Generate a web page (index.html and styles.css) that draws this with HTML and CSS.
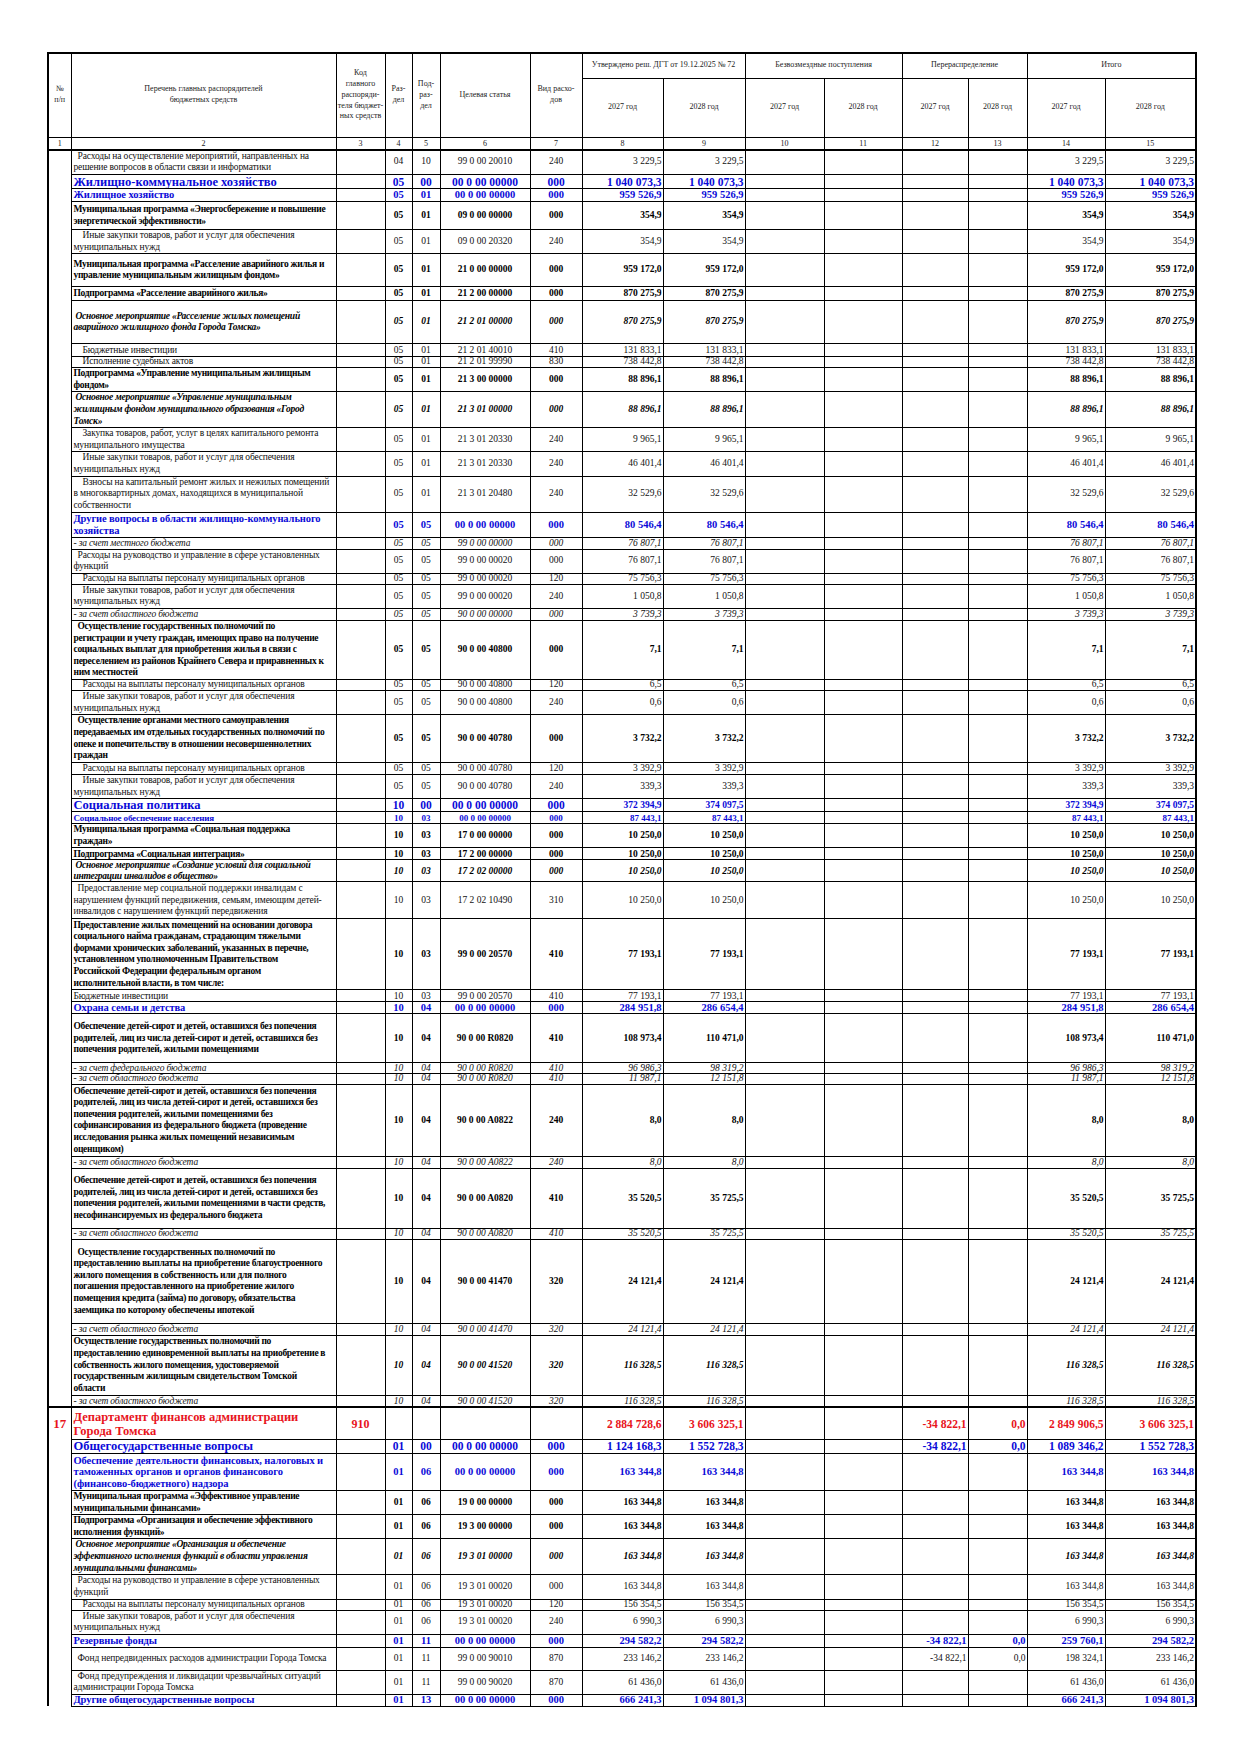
FILE: index.html
```html
<!DOCTYPE html>
<html lang="ru">
<head>
<meta charset="utf-8">
<title>Ведомственная структура расходов</title>
<link rel="stylesheet" href="styles.css">
</head>
<body>
<div class="sheet">
<table class="t">
<colgroup>
<col class="w1"><col class="w2"><col class="w3"><col class="w4"><col class="w5"><col class="w6"><col class="w7"><col class="w8"><col class="w9"><col class="w10"><col class="w11"><col class="w12"><col class="w13"><col class="w14"><col class="w15">
</colgroup>
<thead>
<tr class="h25">
<th rowspan="2" class="bl">№<br>п/п</th>
<th rowspan="2">Перечень главных распорядителей<br>бюджетных средств</th>
<th rowspan="2">Код<br>главного<br>распоряди-<br>теля бюджет-<br>ных средств</th>
<th rowspan="2">Раз-<br>дел</th>
<th rowspan="2">Под-<br>раз-<br>дел</th>
<th rowspan="2">Целевая статья</th>
<th rowspan="2">Вид расхо-<br>дов</th>
<th colspan="2">Утверждено реш. ДГТ от 19.12.2025 № 72</th>
<th colspan="2">Безвозмездные поступления</th>
<th colspan="2">Перераспределение</th>
<th colspan="2" class="br">Итого</th>
</tr>
<tr class="h59">
<th>2027 год</th><th>2028 год</th><th>2027 год</th><th>2028 год</th><th>2027 год</th><th>2028 год</th><th>2027 год</th><th class="br">2028 год</th>
</tr>
<tr class="num">
<th class="bl">1</th><th>2</th><th>3</th><th>4</th><th>5</th><th>6</th><th>7</th><th>8</th><th>9</th><th>10</th><th>11</th><th>12</th><th>13</th><th>14</th><th class="br">15</th>
</tr>
</thead>
<tbody>
<tr class="h25"><td></td><td class="i1">Расходы на осуществление мероприятий, направленных на<br>решение вопросов в области связи и информатики</td><td></td><td>04</td><td>10</td><td>99 0 00 20010</td><td>240</td><td>3 229,5</td><td>3 229,5</td><td></td><td></td><td></td><td></td><td>3 229,5</td><td>3 229,5</td></tr>
<tr class="g1 h14"><td></td><td>Жилищно-коммунальное хозяйство</td><td></td><td>05</td><td>00</td><td>00 0 00 00000</td><td>000</td><td>1 040 073,3</td><td>1 040 073,3</td><td></td><td></td><td></td><td></td><td>1 040 073,3</td><td>1 040 073,3</td></tr>
<tr class="g2 h13"><td></td><td>Жилищное хозяйство</td><td></td><td>05</td><td>01</td><td>00 0 00 00000</td><td>000</td><td>959 526,9</td><td>959 526,9</td><td></td><td></td><td></td><td></td><td>959 526,9</td><td>959 526,9</td></tr>
<tr class="b h28"><td></td><td>Муниципальная программа «Энергосбережение и повышение<br>энергетической эффективности»</td><td></td><td>05</td><td>01</td><td>09 0 00 00000</td><td>000</td><td>354,9</td><td>354,9</td><td></td><td></td><td></td><td></td><td>354,9</td><td>354,9</td></tr>
<tr class="h24"><td></td><td class="i2">Иные закупки товаров, работ и услуг для обеспечения<br>муниципальных нужд</td><td></td><td>05</td><td>01</td><td>09 0 00 20320</td><td>240</td><td>354,9</td><td>354,9</td><td></td><td></td><td></td><td></td><td>354,9</td><td>354,9</td></tr>
<tr class="b h33"><td></td><td>Муниципальная программа «Расселение аварийного жилья и<br>управление муниципальным жилищным фондом»</td><td></td><td>05</td><td>01</td><td>21 0 00 00000</td><td>000</td><td>959 172,0</td><td>959 172,0</td><td></td><td></td><td></td><td></td><td>959 172,0</td><td>959 172,0</td></tr>
<tr class="b h14"><td></td><td>Подпрограмма «Расселение аварийного жилья»</td><td></td><td>05</td><td>01</td><td>21 2 00 00000</td><td>000</td><td>870 275,9</td><td>870 275,9</td><td></td><td></td><td></td><td></td><td>870 275,9</td><td>870 275,9</td></tr>
<tr class="bi h43"><td></td><td class="i0">Основное мероприятие «Расселение жилых помещений<br>аварийного жилищного фонда Города Томска»</td><td></td><td>05</td><td>01</td><td>21 2 01 00000</td><td>000</td><td>870 275,9</td><td>870 275,9</td><td></td><td></td><td></td><td></td><td>870 275,9</td><td>870 275,9</td></tr>
<tr class="h13"><td></td><td class="i2">Бюджетные инвестиции</td><td></td><td>05</td><td>01</td><td>21 2 01 40010</td><td>410</td><td>131 833,1</td><td>131 833,1</td><td></td><td></td><td></td><td></td><td>131 833,1</td><td>131 833,1</td></tr>
<tr class="s h11"><td></td><td class="i2">Исполнение судебных актов</td><td></td><td>05</td><td>01</td><td>21 2 01 99990</td><td>830</td><td>738 442,8</td><td>738 442,8</td><td></td><td></td><td></td><td></td><td>738 442,8</td><td>738 442,8</td></tr>
<tr class="b h24"><td></td><td>Подпрограмма «Управление муниципальным жилищным<br>фондом»</td><td></td><td>05</td><td>01</td><td>21 3 00 00000</td><td>000</td><td>88 896,1</td><td>88 896,1</td><td></td><td></td><td></td><td></td><td>88 896,1</td><td>88 896,1</td></tr>
<tr class="bi h35"><td></td><td class="i0">Основное мероприятие «Управление муниципальным<br>жилищным фондом муниципального образования «Город<br>Томск»</td><td></td><td>05</td><td>01</td><td>21 3 01 00000</td><td>000</td><td>88 896,1</td><td>88 896,1</td><td></td><td></td><td></td><td></td><td>88 896,1</td><td>88 896,1</td></tr>
<tr class="h24"><td></td><td class="i2">Закупка товаров, работ, услуг в целях капитального ремонта<br>муниципального имущества</td><td></td><td>05</td><td>01</td><td>21 3 01 20330</td><td>240</td><td>9 965,1</td><td>9 965,1</td><td></td><td></td><td></td><td></td><td>9 965,1</td><td>9 965,1</td></tr>
<tr class="h24"><td></td><td class="i2">Иные закупки товаров, работ и услуг для обеспечения<br>муниципальных нужд</td><td></td><td>05</td><td>01</td><td>21 3 01 20330</td><td>240</td><td>46 401,4</td><td>46 401,4</td><td></td><td></td><td></td><td></td><td>46 401,4</td><td>46 401,4</td></tr>
<tr class="h36"><td></td><td class="i2">Взносы на капитальный ремонт жилых и нежилых помещений<br>в многоквартирных домах, находящихся в муниципальной<br>собственности</td><td></td><td>05</td><td>01</td><td>21 3 01 20480</td><td>240</td><td>32 529,6</td><td>32 529,6</td><td></td><td></td><td></td><td></td><td>32 529,6</td><td>32 529,6</td></tr>
<tr class="g2 h25"><td></td><td>Другие вопросы в области жилищно-коммунального<br>хозяйства</td><td></td><td>05</td><td>05</td><td>00 0 00 00000</td><td>000</td><td>80 546,4</td><td>80 546,4</td><td></td><td></td><td></td><td></td><td>80 546,4</td><td>80 546,4</td></tr>
<tr class="it h12"><td></td><td>- за счет местного бюджета</td><td></td><td>05</td><td>05</td><td>99 0 00 00000</td><td>000</td><td>76 807,1</td><td>76 807,1</td><td></td><td></td><td></td><td></td><td>76 807,1</td><td>76 807,1</td></tr>
<tr class="h24"><td></td><td class="i1">Расходы на руководство и управление в сфере установленных<br>функций</td><td></td><td>05</td><td>05</td><td>99 0 00 00020</td><td>000</td><td>76 807,1</td><td>76 807,1</td><td></td><td></td><td></td><td></td><td>76 807,1</td><td>76 807,1</td></tr>
<tr class="s h11"><td></td><td class="i2">Расходы на выплаты персоналу муниципальных органов</td><td></td><td>05</td><td>05</td><td>99 0 00 00020</td><td>120</td><td>75 756,3</td><td>75 756,3</td><td></td><td></td><td></td><td></td><td>75 756,3</td><td>75 756,3</td></tr>
<tr class="h24"><td></td><td class="i2">Иные закупки товаров, работ и услуг для обеспечения<br>муниципальных нужд</td><td></td><td>05</td><td>05</td><td>99 0 00 00020</td><td>240</td><td>1 050,8</td><td>1 050,8</td><td></td><td></td><td></td><td></td><td>1 050,8</td><td>1 050,8</td></tr>
<tr class="it h12"><td></td><td>- за счет областного бюджета</td><td></td><td>05</td><td>05</td><td>90 0 00 00000</td><td>000</td><td>3 739,3</td><td>3 739,3</td><td></td><td></td><td></td><td></td><td>3 739,3</td><td>3 739,3</td></tr>
<tr class="b h59"><td></td><td class="i1">Осуществление государственных полномочий по<br>регистрации и учету граждан, имеющих право на получение<br>социальных выплат для приобретения жилья в связи с<br>переселением из районов Крайнего Севера и приравненных к<br>ним местностей</td><td></td><td>05</td><td>05</td><td>90 0 00 40800</td><td>000</td><td>7,1</td><td>7,1</td><td></td><td></td><td></td><td></td><td>7,1</td><td>7,1</td></tr>
<tr class="s h11"><td></td><td class="i2">Расходы на выплаты персоналу муниципальных органов</td><td></td><td>05</td><td>05</td><td>90 0 00 40800</td><td>120</td><td>6,5</td><td>6,5</td><td></td><td></td><td></td><td></td><td>6,5</td><td>6,5</td></tr>
<tr class="h24"><td></td><td class="i2">Иные закупки товаров, работ и услуг для обеспечения<br>муниципальных нужд</td><td></td><td>05</td><td>05</td><td>90 0 00 40800</td><td>240</td><td>0,6</td><td>0,6</td><td></td><td></td><td></td><td></td><td>0,6</td><td>0,6</td></tr>
<tr class="b h48"><td></td><td class="i1">Осуществление органами местного самоуправления<br>передаваемых им отдельных государственных полномочий по<br>опеке и попечительству в отношении несовершеннолетних<br>граждан</td><td></td><td>05</td><td>05</td><td>90 0 00 40780</td><td>000</td><td>3 732,2</td><td>3 732,2</td><td></td><td></td><td></td><td></td><td>3 732,2</td><td>3 732,2</td></tr>
<tr class="h12"><td></td><td class="i2">Расходы на выплаты персоналу муниципальных органов</td><td></td><td>05</td><td>05</td><td>90 0 00 40780</td><td>120</td><td>3 392,9</td><td>3 392,9</td><td></td><td></td><td></td><td></td><td>3 392,9</td><td>3 392,9</td></tr>
<tr class="h24"><td></td><td class="i2">Иные закупки товаров, работ и услуг для обеспечения<br>муниципальных нужд</td><td></td><td>05</td><td>05</td><td>90 0 00 40780</td><td>240</td><td>339,3</td><td>339,3</td><td></td><td></td><td></td><td></td><td>339,3</td><td>339,3</td></tr>
<tr class="gp h13"><td></td><td>Социальная политика</td><td></td><td>10</td><td>00</td><td>00 0 00 00000</td><td>000</td><td>372 394,9</td><td>374 097,5</td><td></td><td></td><td></td><td></td><td>372 394,9</td><td>374 097,5</td></tr>
<tr class="g3 h12"><td></td><td>Социальное обеспечение населения</td><td></td><td>10</td><td>03</td><td>00 0 00 00000</td><td>000</td><td>87 443,1</td><td>87 443,1</td><td></td><td></td><td></td><td></td><td>87 443,1</td><td>87 443,1</td></tr>
<tr class="b h24"><td></td><td>Муниципальная программа «Социальная поддержка<br>граждан»</td><td></td><td>10</td><td>03</td><td>17 0 00 00000</td><td>000</td><td>10 250,0</td><td>10 250,0</td><td></td><td></td><td></td><td></td><td>10 250,0</td><td>10 250,0</td></tr>
<tr class="b h12"><td></td><td>Подпрограмма «Социальная интеграция»</td><td></td><td>10</td><td>03</td><td>17 2 00 00000</td><td>000</td><td>10 250,0</td><td>10 250,0</td><td></td><td></td><td></td><td></td><td>10 250,0</td><td>10 250,0</td></tr>
<tr class="bi tight h22"><td></td><td class="i0">Основное мероприятие «Создание условий для социальной<br>интеграции инвалидов в общество»</td><td></td><td>10</td><td>03</td><td>17 2 02 00000</td><td>000</td><td>10 250,0</td><td>10 250,0</td><td></td><td></td><td></td><td></td><td>10 250,0</td><td>10 250,0</td></tr>
<tr class="h37"><td></td><td class="i1">Предоставление мер социальной поддержки инвалидам с<br>нарушением функций передвижения, семьям, имеющим детей-<br>инвалидов с нарушением функций передвижения</td><td></td><td>10</td><td>03</td><td>17 2 02 10490</td><td>310</td><td>10 250,0</td><td>10 250,0</td><td></td><td></td><td></td><td></td><td>10 250,0</td><td>10 250,0</td></tr>
<tr class="b h71"><td></td><td>Предоставление жилых помещений на основании договора<br>социального найма гражданам, страдающим тяжелыми<br>формами хронических заболеваний, указанных в перечне,<br>установленном уполномоченным Правительством<br>Российской Федерации федеральным органом<br>исполнительной власти, в том числе:</td><td></td><td>10</td><td>03</td><td>99 0 00 20570</td><td>410</td><td>77 193,1</td><td>77 193,1</td><td></td><td></td><td></td><td></td><td>77 193,1</td><td>77 193,1</td></tr>
<tr class="h12"><td></td><td>Бюджетные инвестиции</td><td></td><td>10</td><td>03</td><td>99 0 00 20570</td><td>410</td><td>77 193,1</td><td>77 193,1</td><td></td><td></td><td></td><td></td><td>77 193,1</td><td>77 193,1</td></tr>
<tr class="g2 h12"><td></td><td>Охрана семьи и детства</td><td></td><td>10</td><td>04</td><td>00 0 00 00000</td><td>000</td><td>284 951,8</td><td>286 654,4</td><td></td><td></td><td></td><td></td><td>284 951,8</td><td>286 654,4</td></tr>
<tr class="b h49"><td></td><td>Обеспечение детей-сирот и детей, оставшихся без попечения<br>родителей, лиц из числа детей-сирот и детей, оставшихся без<br>попечения родителей, жилыми помещениями</td><td></td><td>10</td><td>04</td><td>90 0 00 R0820</td><td>410</td><td>108 973,4</td><td>110 471,0</td><td></td><td></td><td></td><td></td><td>108 973,4</td><td>110 471,0</td></tr>
<tr class="it s h11"><td></td><td>- за счет федерального бюджета</td><td></td><td>10</td><td>04</td><td>90 0 00 R0820</td><td>410</td><td>96 986,3</td><td>98 319,2</td><td></td><td></td><td></td><td></td><td>96 986,3</td><td>98 319,2</td></tr>
<tr class="it s h10"><td></td><td>- за счет областного бюджета</td><td></td><td>10</td><td>04</td><td>90 0 00 R0820</td><td>410</td><td>11 987,1</td><td>12 151,8</td><td></td><td></td><td></td><td></td><td>11 987,1</td><td>12 151,8</td></tr>
<tr class="b h72"><td></td><td>Обеспечение детей-сирот и детей, оставшихся без попечения<br>родителей, лиц из числа детей-сирот и детей, оставшихся без<br>попечения родителей, жилыми помещениями без<br>софинансирования из федерального бюджета (проведение<br>исследования рынка жилых помещений независимым<br>оценщиком)</td><td></td><td>10</td><td>04</td><td>90 0 00 A0822</td><td>240</td><td>8,0</td><td>8,0</td><td></td><td></td><td></td><td></td><td>8,0</td><td>8,0</td></tr>
<tr class="it h12"><td></td><td>- за счет областного бюджета</td><td></td><td>10</td><td>04</td><td>90 0 00 A0822</td><td>240</td><td>8,0</td><td>8,0</td><td></td><td></td><td></td><td></td><td>8,0</td><td>8,0</td></tr>
<tr class="b h60"><td></td><td>Обеспечение детей-сирот и детей, оставшихся без попечения<br>родителей, лиц из числа детей-сирот и детей, оставшихся без<br>попечения родителей, жилыми помещениями в части средств,<br>несофинансируемых из федерального бюджета</td><td></td><td>10</td><td>04</td><td>90 0 00 A0820</td><td>410</td><td>35 520,5</td><td>35 725,5</td><td></td><td></td><td></td><td></td><td>35 520,5</td><td>35 725,5</td></tr>
<tr class="it s h11"><td></td><td>- за счет областного бюджета</td><td></td><td>10</td><td>04</td><td>90 0 00 A0820</td><td>410</td><td>35 520,5</td><td>35 725,5</td><td></td><td></td><td></td><td></td><td>35 520,5</td><td>35 725,5</td></tr>
<tr class="b h84"><td></td><td class="i1">Осуществление государственных полномочий по<br>предоставлению выплаты на приобретение благоустроенного<br>жилого помещения в собственность или для полного<br>погашения предоставленного на приобретение жилого<br>помещения кредита (займа) по договору, обязательства<br>заемщика по которому обеспечены ипотекой</td><td></td><td>10</td><td>04</td><td>90 0 00 41470</td><td>320</td><td>24 121,4</td><td>24 121,4</td><td></td><td></td><td></td><td></td><td>24 121,4</td><td>24 121,4</td></tr>
<tr class="it h12"><td></td><td>- за счет областного бюджета</td><td></td><td>10</td><td>04</td><td>90 0 00 41470</td><td>320</td><td>24 121,4</td><td>24 121,4</td><td></td><td></td><td></td><td></td><td>24 121,4</td><td>24 121,4</td></tr>
<tr class="b bx h60"><td></td><td>Осуществление государственных полномочий по<br>предоставлению единовременной выплаты на приобретение в<br>собственность жилого помещения, удостоверяемой<br>государственным жилищным свидетельством Томской<br>области</td><td></td><td>10</td><td>04</td><td>90 0 00 41520</td><td>320</td><td>116 328,5</td><td>116 328,5</td><td></td><td></td><td></td><td></td><td>116 328,5</td><td>116 328,5</td></tr>
<tr class="it h12"><td></td><td>- за счет областного бюджета</td><td></td><td>10</td><td>04</td><td>90 0 00 41520</td><td>320</td><td>116 328,5</td><td>116 328,5</td><td></td><td></td><td></td><td></td><td>116 328,5</td><td>116 328,5</td></tr>
<tr class="dept h32"><td>17</td><td>Департамент финансов администрации<br>Города Томска</td><td>910</td><td></td><td></td><td></td><td></td><td>2 884 728,6</td><td>3 606 325,1</td><td></td><td></td><td>-34 822,1</td><td>0,0</td><td>2 849 906,5</td><td>3 606 325,1</td></tr>
<tr class="g1 h14"><td></td><td>Общегосударственные вопросы</td><td></td><td>01</td><td>00</td><td>00 0 00 00000</td><td>000</td><td>1 124 168,3</td><td>1 552 728,3</td><td></td><td></td><td>-34 822,1</td><td>0,0</td><td>1 089 346,2</td><td>1 552 728,3</td></tr>
<tr class="g2 h37"><td></td><td>Обеспечение деятельности финансовых, налоговых и<br>таможенных органов и органов финансового<br>(финансово-бюджетного) надзора</td><td></td><td>01</td><td>06</td><td>00 0 00 00000</td><td>000</td><td>163 344,8</td><td>163 344,8</td><td></td><td></td><td></td><td></td><td>163 344,8</td><td>163 344,8</td></tr>
<tr class="b h24"><td></td><td>Муниципальная программа «Эффективное управление<br>муниципальными финансами»</td><td></td><td>01</td><td>06</td><td>19 0 00 00000</td><td>000</td><td>163 344,8</td><td>163 344,8</td><td></td><td></td><td></td><td></td><td>163 344,8</td><td>163 344,8</td></tr>
<tr class="b h24"><td></td><td>Подпрограмма «Организация и обеспечение эффективного<br>исполнения функций»</td><td></td><td>01</td><td>06</td><td>19 3 00 00000</td><td>000</td><td>163 344,8</td><td>163 344,8</td><td></td><td></td><td></td><td></td><td>163 344,8</td><td>163 344,8</td></tr>
<tr class="bi h36"><td></td><td class="i0">Основное мероприятие «Организация и обеспечение<br>эффективного исполнения функций в области управления<br>муниципальными финансами»</td><td></td><td>01</td><td>06</td><td>19 3 01 00000</td><td>000</td><td>163 344,8</td><td>163 344,8</td><td></td><td></td><td></td><td></td><td>163 344,8</td><td>163 344,8</td></tr>
<tr class="h24"><td></td><td class="i1">Расходы на руководство и управление в сфере установленных<br>функций</td><td></td><td>01</td><td>06</td><td>19 3 01 00020</td><td>000</td><td>163 344,8</td><td>163 344,8</td><td></td><td></td><td></td><td></td><td>163 344,8</td><td>163 344,8</td></tr>
<tr class="s h11"><td></td><td class="i2">Расходы на выплаты персоналу муниципальных органов</td><td></td><td>01</td><td>06</td><td>19 3 01 00020</td><td>120</td><td>156 354,5</td><td>156 354,5</td><td></td><td></td><td></td><td></td><td>156 354,5</td><td>156 354,5</td></tr>
<tr class="h24"><td></td><td class="i2">Иные закупки товаров, работ и услуг для обеспечения<br>муниципальных нужд</td><td></td><td>01</td><td>06</td><td>19 3 01 00020</td><td>240</td><td>6 990,3</td><td>6 990,3</td><td></td><td></td><td></td><td></td><td>6 990,3</td><td>6 990,3</td></tr>
<tr class="g2 h13"><td></td><td>Резервные фонды</td><td></td><td>01</td><td>11</td><td>00 0 00 00000</td><td>000</td><td>294 582,2</td><td>294 582,2</td><td></td><td></td><td>-34 822,1</td><td>0,0</td><td>259 760,1</td><td>294 582,2</td></tr>
<tr class="h23"><td></td><td class="i1">Фонд непредвиденных расходов администрации Города Томска</td><td></td><td>01</td><td>11</td><td>99 0 00 90010</td><td>870</td><td>233 146,2</td><td>233 146,2</td><td></td><td></td><td>-34 822,1</td><td>0,0</td><td>198 324,1</td><td>233 146,2</td></tr>
<tr class="h24"><td></td><td class="i1">Фонд предупреждения и ликвидации чрезвычайных ситуаций<br>администрации Города Томска</td><td></td><td>01</td><td>11</td><td>99 0 00 90020</td><td>870</td><td>61 436,0</td><td>61 436,0</td><td></td><td></td><td></td><td></td><td>61 436,0</td><td>61 436,0</td></tr>
<tr class="g2 h12"><td></td><td>Другие общегосударственные вопросы</td><td></td><td>01</td><td>13</td><td>00 0 00 00000</td><td>000</td><td>666 241,3</td><td>1 094 801,3</td><td></td><td></td><td></td><td></td><td>666 241,3</td><td>1 094 801,3</td></tr>
</tbody>
</table>
</div>
</body>
</html>
```
FILE: styles.css
```css
html, body {
  margin: 0;
  padding: 0;
  background: #fff;
}

body {
  font-family: "Liberation Serif", "Times New Roman", serif;
  color: #111;
}

.sheet {
  padding: 52px 0 0 47px;
}

.t {
  border-collapse: collapse;
  table-layout: fixed;
  width: 1148px;
}

.w1 { width: 23px; }
.w2 { width: 265px; }
.w3 { width: 49px; }
.w4 { width: 27px; }
.w5 { width: 28px; }
.w6 { width: 90px; }
.w7 { width: 52px; }
.w8 { width: 81px; }
.w9 { width: 82px; }
.w10 { width: 79px; }
.w11 { width: 78px; }
.w12 { width: 66px; }
.w13 { width: 59px; }
.w14 { width: 78px; }
.w15 { width: 91px; }

.t td,
.t th {
  border: 1px solid #000;
  padding: 0 1px;
  vertical-align: middle;
  overflow: hidden;
  white-space: nowrap;
}

.t td {
  font-size: 9.5px;
  line-height: 11.6px;
}

.t th {
  font-weight: normal;
  font-size: 8px;
  line-height: 10.8px;
  text-align: center;
  color: #222;
}

.t thead tr:first-child th { border-top: 2px solid #000; }
.t th.bl { border-left: 2px solid #000; }
.t th.br { border-right: 2px solid #000; }
.t thead tr.num th {
  border-bottom: 2px solid #000;
  line-height: 9px;
  height: 11px;
}

.t tbody td:nth-child(1) {
  border-top: none;
  border-bottom: none;
  border-left: 2px solid #000;
  text-align: center;
}
.t tbody td:nth-child(2) {
  text-align: left;
  padding-left: 2px;
  letter-spacing: -0.15px;
}
.t tbody td:nth-child(n+3):nth-child(-n+7) { text-align: center; }
.t tbody td:nth-child(n+8) {
  text-align: right;
  padding-right: 1px;
}
.t tbody td:nth-child(15) { border-right: 2px solid #000; }

.i0 { text-indent: 2px; }
.i1 { text-indent: 4px; }
.i2 { text-indent: 9px; }

/* row heights */
.h10 { height: 10px; }
.h11 { height: 11px; }
.h12 { height: 12px; }
.h13 { height: 13px; }
.h14 { height: 14px; }
.h22 { height: 22px; }
.h23 { height: 23px; }
.h24 { height: 24px; }
.h25 { height: 25px; }
.h28 { height: 28px; }
.h32 { height: 32px; }
.h33 { height: 33px; }
.h35 { height: 35px; }
.h36 { height: 36px; }
.h37 { height: 37px; }
.h43 { height: 43px; }
.h48 { height: 48px; }
.h49 { height: 49px; }
.h59 { height: 59px; }
.h60 { height: 60px; }
.h71 { height: 71px; }
.h72 { height: 72px; }
.h84 { height: 84px; }

/* row types */
.t tr.b td { font-weight: bold; color: #000; }
.t tr.b td:nth-child(2) { letter-spacing: -0.3px; }
.t tr.bi td { font-weight: bold; font-style: italic; color: #000; }
.t tr.bi td:nth-child(2) { letter-spacing: -0.25px; }
.t tr.it td { font-style: italic; }
.t tr.bx td:nth-child(n+4) { font-style: italic; }

.t tr.g1 td {
  font-weight: bold;
  color: #0a0ad8;
  font-size: 11.5px;
  line-height: 12px;
}
.t tr.g1 td:nth-child(2) { font-size: 12.5px; letter-spacing: 0; }

.t tr.g2 td {
  font-weight: bold;
  color: #0a0ad8;
  font-size: 10.5px;
  line-height: 11.6px;
}
.t tr.g2 td:nth-child(2) { letter-spacing: -0.1px; }

.t tr.g3 td {
  font-weight: bold;
  color: #0a0ad8;
  font-size: 9px;
  line-height: 10px;
}

.t tr.gp td {
  font-weight: bold;
  color: #0a0ad8;
  font-size: 11.5px;
  line-height: 11px;
}
.t tr.gp td:nth-child(2) { font-size: 12.5px; letter-spacing: 0; }
.t tr.gp td:nth-child(n+8) { font-size: 9.5px; }

.t tbody tr.dept td {
  border-top: 2px solid #000;
  font-weight: bold;
  color: #e8141c;
  font-size: 11.5px;
  line-height: 14px;
}
.t tbody tr.dept td:nth-child(1) { font-size: 13px; }
.t tbody tr.dept td:nth-child(2) { font-size: 12.5px; letter-spacing: 0; }
.t tbody tr.dept td:nth-child(3) { font-size: 12px; }

/* single-line short rows: keep their pitch tight */
.t tr.h12 td,
.t tr.h13 td { line-height: 10.2px; }
.t tr.s td { line-height: 9.5px; }
.t tr.tight td { line-height: 10.5px; }
```
